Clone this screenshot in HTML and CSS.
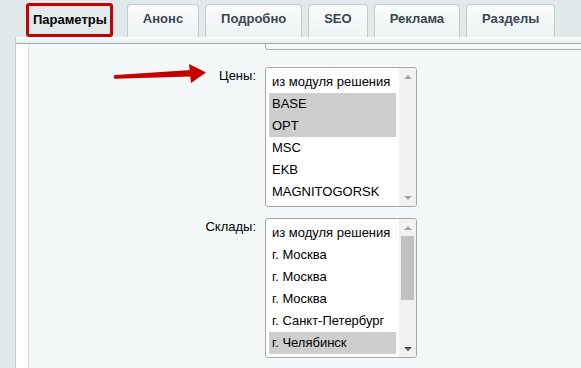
FILE: index.html
```html
<!DOCTYPE html>
<html>
<head>
    <title>Параметры</title>
    <link rel="stylesheet" href="styles.css">
</head>
<body>
    <div class="tabs">
        <div class="tab tab-active">Параметры</div>
        <div class="tab">Анонс</div>
        <div class="tab">Подробно</div>
        <div class="tab">SEO</div>
        <div class="tab">Реклама</div>
        <div class="tab">Разделы</div>
    </div>

    <div class="panel">
        <div class="panel-top"></div>
        <div class="panel-body">
            <div class="panel-inner">
                <div class="prev-field"></div>

                <div class="form">
                    <div class="form-label">Цены:</div>
                    <div class="listbox">
                        <div class="options">
                            <div class="option">из модуля решения</div>
                            <div class="option selected">BASE</div>
                            <div class="option selected">OPT</div>
                            <div class="option">MSC</div>
                            <div class="option">EKB</div>
                            <div class="option">MAGNITOGORSK</div>
                        </div>
                        <div class="scrollbar">
                            <div class="sb-btn"><span class="tri-up"></span></div>
                            <div class="sb-track"></div>
                            <div class="sb-btn"><span class="tri-down"></span></div>
                        </div>
                    </div>

                    <div class="form-label">Склады:</div>
                    <div class="listbox">
                        <div class="options">
                            <div class="option">из модуля решения</div>
                            <div class="option">г. Москва</div>
                            <div class="option">г. Москва</div>
                            <div class="option">г. Москва</div>
                            <div class="option">г. Санкт-Петербург</div>
                            <div class="option selected">г. Челябинск</div>
                        </div>
                        <div class="scrollbar">
                            <div class="sb-btn"><span class="tri-up"></span></div>
                            <div class="sb-track"><div class="sb-thumb"></div></div>
                            <div class="sb-btn"><span class="tri-down active"></span></div>
                        </div>
                    </div>
                </div>
            </div>
        </div>
    </div>

    <!-- red annotation arrow pointing at "Цены" -->
    <svg class="arrow" width="100" height="30" viewBox="0 0 100 30">
        <circle cx="5.5" cy="16.8" r="1.9" fill="#c40000"/>
        <polygon points="5.5,14.9 81,10 81,16.5 5.5,18.7" fill="#c40000"/>
        <polygon points="79,4 96,12.6 81,23" fill="#c40000"/>
    </svg>
</body>
</html>
```

FILE: styles.css
```css
html,
body {
    margin: 0;
    padding: 0;
}

body {
    min-height: 100vh;
    display: flex;
    flex-direction: column;
    background: #dfe8ea;
    font-family: "Liberation Sans", Arial, sans-serif;
    font-size: 13px;
    color: #000;
    overflow: hidden;
}

/* Tabs */
.tabs {
    display: flex;
    align-items: flex-end;
    height: 37px;
    padding-left: 26px;
    background: #e1e9ea;
    box-sizing: border-box;
}

.tab {
    height: 33px;
    line-height: 28px;
    padding: 0 15px 4px;
    margin-right: 6px;
    box-sizing: border-box;
    border: 1px solid #c3cbce;
    border-bottom: none;
    border-radius: 4px 4px 0 0;
    background: linear-gradient(to bottom, #fbfcfc, #eef2f3);
    font-weight: bold;
    color: #3a4652;
    white-space: nowrap;
}

.tab-active {
    height: 34px;
    padding: 0 3px 4px 4px;
    margin-right: 14px;
    border: 3px solid #c80000;
    border-radius: 3px;
    background: #e4eaeb;
    line-height: 27px;
    color: #000;
}

/* Panel frame */
.panel {
    flex: 1;
    display: flex;
    flex-direction: column;
    margin-left: 15px;
    border-left: 1px solid #c4ced1;
}

.panel-top {
    height: 6px;
    background: linear-gradient(to bottom, #fdfefe, #e6ecee);
    border-bottom: 1px solid #a4adb0;
}

.panel-body {
    flex: 1;
    display: flex;
    border-left: 12px solid #fff;
}

.panel-inner {
    flex: 1;
    border-left: 1px solid #d4dfe4;
    background: #f4f8f9;
    overflow: hidden;
}

.prev-field {
    width: 400px;
    height: 5px;
    margin-left: 236px;
    border: 1px solid #a9b1b4;
    border-top: none;
    border-radius: 0 0 0 3px;
}

/* Form */
.form {
    display: grid;
    grid-template-columns: 227px 152px;
    column-gap: 9px;
    row-gap: 11px;
    padding-top: 17px;
}

.form-label {
    text-align: right;
    padding-top: 1px;
}

.listbox {
    display: flex;
    height: 140px;
    box-sizing: border-box;
    border: 1px solid #a6a6a6;
    border-radius: 3px;
    background: #fff;
    overflow: hidden;
}

.options {
    flex: 1;
    padding: 3px;
    overflow: hidden;
}

.option {
    height: 22px;
    line-height: 22px;
    padding-left: 3px;
    white-space: nowrap;
}

.option.selected {
    background: #cecece;
}

/* Fake native scrollbar */
.scrollbar {
    width: 17px;
    display: flex;
    flex-direction: column;
    background: #f1f1f1;
}

.sb-btn {
    height: 17px;
    display: flex;
    align-items: center;
    justify-content: center;
}

.sb-track {
    flex: 1;
    padding: 0 2px;
}

.sb-thumb {
    height: 64px;
    background: #c1c1c1;
}

.tri-up,
.tri-down {
    width: 0;
    height: 0;
    border-left: 4px solid transparent;
    border-right: 4px solid transparent;
}

.tri-up {
    border-bottom: 4px solid #a3a3a3;
}

.tri-down {
    border-top: 4px solid #a3a3a3;
}

.tri-down.active {
    border-top-color: #505050;
}

/* Annotation */
.arrow {
    position: absolute;
    left: 110px;
    top: 60px;
}
```
